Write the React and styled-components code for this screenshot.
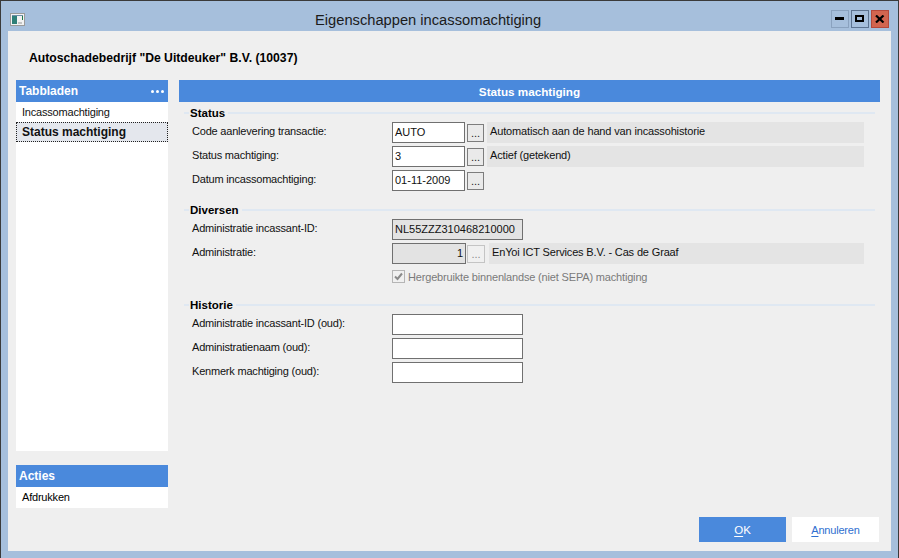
import React from "react";
import styled, { createGlobalStyle } from "styled-components";

const Global = createGlobalStyle`
  html, body { margin: 0; padding: 0; background: #a6bfdc; }
  body { font-family: "Liberation Sans", Arial, sans-serif; font-size: 11px; color: #000; }
`;

const Window = styled.div`
  width: 899px; height: 558px; box-sizing: border-box;
  background: #a6bfdc; display: flex; flex-direction: column;
  border-top: 1px solid #3a3a3a; border-left: 1px solid #3a3a3a; border-right: 1px solid #3a3a3a;
  overflow: hidden;
`;
const TitleBar = styled.div`
  height: 30px; flex: none; display: flex; align-items: flex-start; padding: 0 9px 0 9px;
`;
const TitleIconWrap = styled.div`display: flex; width: 15px; margin-top: 12px;`;
const TitleText = styled.div`
  font-size: 14.7px; color: #1b1b1b; margin: 11px 0 0 290px; line-height: 17px; white-space: nowrap;
`;
const WinButtons = styled.div`display: flex; margin-left: auto; gap: 2px; margin-top: 9px;`;
const WinButton = styled.div`
  width: 18px; height: 18px; box-sizing: border-box; display: flex; align-items: center; justify-content: center;
  border: 1px solid ${p => p.$border}; background: ${p => p.$bg};
`;
const Client = styled.div`
  flex: 1; margin: 0 7px 7px 7px; background: #efefef; display: flex; flex-direction: column; min-height: 0;
`;
const Customer = styled.div`
  height: 49px; flex: none; padding: 20px 0 0 21px; box-sizing: border-box;
  font-weight: 700; font-size: 12.2px; line-height: 14px;
`;
const Body = styled.div`display: flex; gap: 11px; padding-left: 8px; padding-right: 11px;`;
const Side = styled.div`width: 152px; flex: none; display: flex; flex-direction: column;`;
const SideHeader = styled.div`
  height: 22px; background: #4a89dc; color: #fff; font-weight: 700; font-size: 12px;
  display: flex; align-items: center; justify-content: space-between; padding: 0 3px 0 3px;
`;
const Dots = styled.span`display: flex; gap: 2px; margin-right: 1px;`;
const Dot = styled.i`width: 3px; height: 3px; background: #fff; border-radius: 50%;`;
const TabList = styled.div`
  background: #fff; height: 349px; display: flex; flex-direction: column; margin-bottom: 14px;
`;
const TabItem = styled.div`
  height: 20px; display: flex; align-items: center; box-sizing: border-box;
  padding-left: ${p => p.$active ? "5px" : "6px"};
  font-size: ${p => p.$active ? "12px" : "11px"};
  letter-spacing: ${p => p.$active ? "0" : "-0.2px"}; color: #111;
  ${p => p.$active && `font-weight:700; background:#e4e7ed; border:1px dotted #222;`}
`;
const ActionItem = styled.div`
  background: #fff; height: 21px; display: flex; align-items: center; padding: 0 0 2px 6px; box-sizing: border-box;
  font-size: 11px; letter-spacing: -0.2px;
`;
const Main = styled.div`flex: 1; display: flex; flex-direction: column;`;
const MainHeader = styled.div`
  height: 22px; background: #4a89dc; color: #fff; font-weight: 700; font-size: 11.7px;
  display: flex; align-items: center; justify-content: center;
`;
const Section = styled.div`
  padding: 4px 0 0 5px; margin-bottom: ${p => p.$mb || 0}px; display: flex; flex-direction: column;
`;
const Legend = styled.div`
  display: flex; align-items: center; height: 14px; width: 691px; font-weight: 700; font-size: 11.5px;
  margin-bottom: 2px;
  &::before { content: ""; width: 5px; height: 2px; background: #dfe8f2; margin-right: 1px; }
  &::after { content: ""; flex: 1; height: 2px; background: #dfe8f2; margin-left: 3px; }
`;
const Row = styled.div`
  display: flex; align-items: flex-start; height: 21px; margin-bottom: 3px;
`;
const Label = styled.div`
  width: 208px; flex: none; padding-left: 8px; box-sizing: border-box; height: 21px; line-height: 18px;
  font-size: 11px; letter-spacing: -0.2px; color: #111;
`;
const Input = styled.div`
  width: ${p => p.$w}px; height: 21px; box-sizing: border-box; flex: none; border: 1px solid #707070;
  background: ${p => p.$disabled ? "#e3e3e3" : "#fff"}; line-height: 19px; padding: 0 2px;
  font-size: 11px; text-align: ${p => p.$right ? "right" : "left"};
  white-space: nowrap; overflow: hidden; color: #111;
`;
const Browse = styled.div`
  width: ${p => p.$disabled ? 18 : 17}px; height: 18px; box-sizing: border-box; flex: none;
  margin: 2px ${p => p.$disabled ? 4 : 3}px 0 ${p => p.$disabled ? 1 : 2}px;
  border: 1px solid ${p => p.$disabled ? "#c4c4c4" : "#7d7d7d"};
  background: ${p => p.$disabled ? "#f0f0f0" : "#eaeaea"};
  color: ${p => p.$disabled ? "#8a8a8a" : "#222"}; font-size: 11px; line-height: 17px; text-align: center;
`;
const Desc = styled.div`
  width: ${p => p.$w}px; height: 21px; background: #e4e4e4; padding-left: 3px; box-sizing: border-box;
  font-size: 11px; letter-spacing: -0.15px; line-height: 18px; color: #111; white-space: nowrap;
`;
const CheckRow = styled.div`
  display: flex; align-items: center; height: 17px; padding-left: 208px; margin-bottom: 9px; margin-top: 1px;
  color: #7a7a7a; font-size: 11px; letter-spacing: -0.17px; gap: 3px;
`;
const CheckBox = styled.div`
  width: 13px; height: 13px; box-sizing: border-box; border: 1px solid #b5b5b5; background: #f0f0f0; flex: none;
  display: flex; align-items: center; justify-content: center;
`;
const Footer = styled.div`
  display: flex; justify-content: flex-end; gap: 6px; padding-right: 12px; margin-top: auto; margin-bottom: 9px;
`;
const Btn = styled.div`
  width: 87px; height: 25px; display: flex; align-items: center; justify-content: center;
  font-size: ${p => p.$primary ? "11.5px" : "11px"}; letter-spacing: ${p => p.$primary ? "0" : "-0.2px"};
  background: ${p => p.$primary ? "#4a89dc" : "#fff"}; color: ${p => p.$primary ? "#fff" : "#2f6fd0"};
  u { text-underline-offset: 2px; }
`;

const AppIcon = () => (
  <svg width="15" height="13" viewBox="0 0 15 13">
    <rect x="0.5" y="0.5" width="14" height="12" fill="#f2f2f2" stroke="#9a9a9a" />
    <rect x="2" y="3" width="5" height="8" fill="#2e7f78" />
    <rect x="2" y="2" width="11" height="1" fill="#6f8fa8" />
    <rect x="8" y="9" width="4" height="2" fill="#c4c4c4" />
    <rect x="12" y="3" width="1" height="4" fill="#1f7a4a" />
  </svg>
);

const Line = ({ label, w, value, disabled, right, browse, desc, descW = 377 }) => (
  <Row>
    <Label>{label}</Label>
    <Input $w={w} $disabled={disabled} $right={right}>{value}</Input>
    {browse && <Browse $disabled={disabled}>...</Browse>}
    {desc !== undefined && <Desc $w={descW}>{desc}</Desc>}
  </Row>
);

export default function App() {
  return (
    <Window>
      <Global />
      <TitleBar>
        <TitleIconWrap><AppIcon /></TitleIconWrap>
        <TitleText>Eigenschappen incassomachtiging</TitleText>
        <WinButtons>
          <WinButton $border="#8aa2bf" $bg="#a6bfdc">
            <svg width="10" height="4" viewBox="0 0 10 4"><rect width="9" height="3" y="0" fill="#000" /></svg>
          </WinButton>
          <WinButton $border="#5d7390" $bg="#a6bfdc">
            <svg width="10" height="8" viewBox="0 0 10 8"><rect x="1" y="1" width="7" height="5" fill="none" stroke="#000" strokeWidth="2" /></svg>
          </WinButton>
          <WinButton $border="#b5483a" $bg="#d2654f">
            <svg width="10" height="8" viewBox="0 0 10 8"><path d="M1 0.5L8.5 7.5M8.5 0.5L1 7.5" stroke="#000" strokeWidth="2.2" /></svg>
          </WinButton>
        </WinButtons>
      </TitleBar>
      <Client>
        <Customer>Autoschadebedrijf "De Uitdeuker" B.V. (10037)</Customer>
        <Body>
          <Side>
            <SideHeader>Tabbladen<Dots><Dot /><Dot /><Dot /></Dots></SideHeader>
            <TabList>
              <TabItem>Incassomachtiging</TabItem>
              <TabItem $active>Status machtiging</TabItem>
            </TabList>
            <SideHeader>Acties</SideHeader>
            <ActionItem>Afdrukken</ActionItem>
          </Side>
          <Main>
            <MainHeader>Status machtiging</MainHeader>
            <Section $mb={5}>
              <Legend>Status</Legend>
              <Line label="Code aanlevering transactie:" w={73} value="AUTO" browse desc="Automatisch aan de hand van incassohistorie" />
              <Line label="Status machtiging:" w={73} value="3" browse desc="Actief (getekend)" />
              <Line label="Datum incassomachtiging:" w={73} value="01-11-2009" browse />
            </Section>
            <Section>
              <Legend>Diversen</Legend>
              <Line label="Administratie incassant-ID:" w={131} value="NL55ZZZ310468210000" disabled />
              <Line label="Administratie:" w={74} value="1" disabled right browse desc="EnYoi ICT Services B.V. - Cas de Graaf" descW={375} />
              <CheckRow>
                <CheckBox>
                  <svg width="11" height="11" viewBox="0 0 11 11"><path d="M2 5.5L4.5 8L9 2.5" fill="none" stroke="#8a8a8a" strokeWidth="2" /></svg>
                </CheckBox>
                Hergebruikte binnenlandse (niet SEPA) machtiging
              </CheckRow>
            </Section>
            <Section>
              <Legend>Historie</Legend>
              <Line label="Administratie incassant-ID (oud):" w={131} value="" />
              <Line label="Administratienaam (oud):" w={131} value="" />
              <Line label="Kenmerk machtiging (oud):" w={131} value="" />
            </Section>
          </Main>
        </Body>
        <Footer>
          <Btn $primary><u>O</u>K</Btn>
          <Btn><u>A</u>nnuleren</Btn>
        </Footer>
      </Client>
    </Window>
  );
}
